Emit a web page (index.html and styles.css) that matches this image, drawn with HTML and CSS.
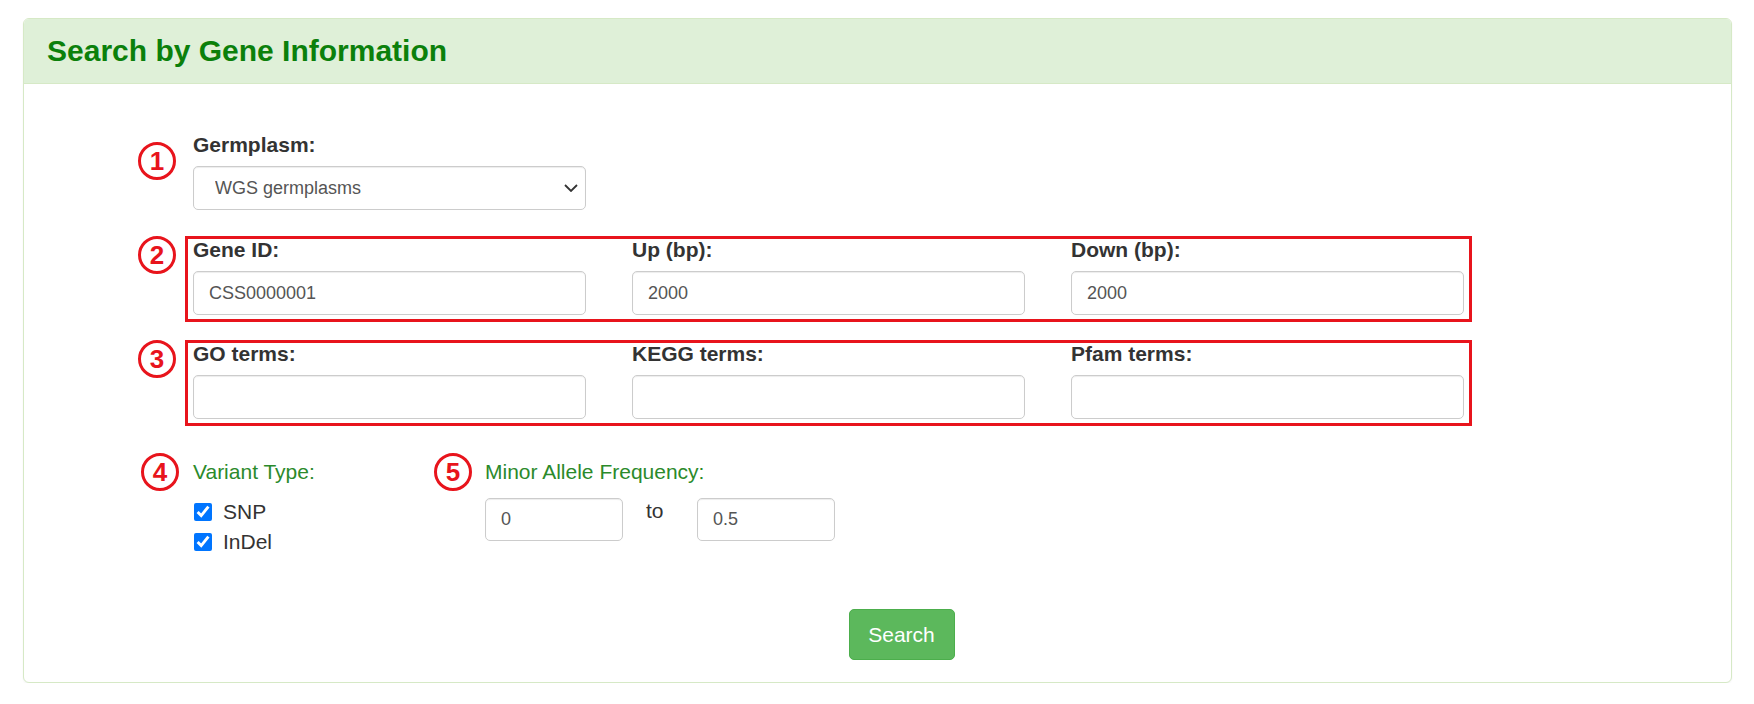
FILE: index.html
```html
<!DOCTYPE html>
<html lang="en">
<head>
    <meta charset="UTF-8">
    <title>Search by Gene Information</title>
    <link rel="stylesheet" href="styles.css">
</head>
<body>
    <div class="panel">
        <div class="panel-heading">
            <h3>Search by Gene Information</h3>
        </div>
        <div class="panel-body">
            <div class="form-row first">
                <span class="marker">1</span>
                <div class="box">
                    <div class="cols">
                        <div class="field">
                            <label for="germplasm">Germplasm:</label>
                            <div class="select-wrap">
                                <select id="germplasm">
                                    <option>WGS germplasms</option>
                                </select>
                                <svg class="chevron" width="14" height="8" viewBox="0 0 14 8"><path d="M1 1l6 6 6-6" fill="none" stroke="#333" stroke-width="1.8"/></svg>
                            </div>
                        </div>
                    </div>
                </div>
            </div>

            <div class="form-row">
                <span class="marker">2</span>
                <div class="box marked">
                    <div class="cols">
                        <div class="field">
                            <label for="gene-id">Gene ID:</label>
                            <input type="text" id="gene-id" value="CSS0000001">
                        </div>
                        <div class="field">
                            <label for="up">Up (bp):</label>
                            <input type="text" id="up" value="2000">
                        </div>
                        <div class="field">
                            <label for="down">Down (bp):</label>
                            <input type="text" id="down" value="2000">
                        </div>
                    </div>
                </div>
            </div>

            <div class="form-row">
                <span class="marker">3</span>
                <div class="box marked">
                    <div class="cols">
                        <div class="field">
                            <label for="go">GO terms:</label>
                            <input type="text" id="go">
                        </div>
                        <div class="field">
                            <label for="kegg">KEGG terms:</label>
                            <input type="text" id="kegg">
                        </div>
                        <div class="field">
                            <label for="pfam">Pfam terms:</label>
                            <input type="text" id="pfam">
                        </div>
                    </div>
                </div>
            </div>

            <div class="form-row last">
                <span class="marker">4</span>
                <div class="box">
                    <div class="options">
                        <div class="variant">
                            <p class="green-label">Variant Type:</p>
                            <label class="check"><input type="checkbox" checked> SNP</label>
                            <label class="check"><input type="checkbox" checked> InDel</label>
                        </div>
                        <span class="marker">5</span>
                        <div class="maf">
                            <p class="green-label">Minor Allele Frequency:</p>
                            <div class="maf-inputs">
                                <input type="text" value="0">
                                <span class="to">to</span>
                                <input type="text" value="0.5">
                            </div>
                        </div>
                    </div>
                </div>
            </div>

            <div class="actions">
                <button type="button">Search</button>
            </div>
        </div>
    </div>
</body>
</html>
```

FILE: styles.css
```css
body {
    margin: 0;
    padding: 18px 22px 0 23px;
    font-family: 'Liberation Sans', Arial, sans-serif;
    font-size: 21px;
    color: #333;
    background-color: #fff;
}
.panel {
    border: 1px solid #d6e9c6;
    border-radius: 6px;
    box-shadow: 0 1px 2px rgba(0,0,0,0.05);
    background-color: #fff;
}
.panel-heading {
    height: 64px;
    padding: 0 23px;
    display: flex;
    align-items: center;
    background-color: #dff0d8;
    border-bottom: 1px solid #d6e9c6;
    border-radius: 5px 5px 0 0;
}
.panel-heading h3 {
    margin: 0;
    font-size: 30px;
    font-weight: bold;
    color: #0b800b;
}
.panel-body {
    padding: 47px 0 22px 114px;
}
.form-row {
    display: flex;
    align-items: flex-start;
    margin-bottom: 18px;
}
.form-row.first {
    margin-bottom: 19px;
}
.form-row.last {
    margin-top: 32px;
}
.marker {
    flex: none;
    width: 32px;
    height: 32px;
    margin: 0 9px 0 0;
    border: 3px solid #e8141c;
    border-radius: 50%;
    display: flex;
    align-items: center;
    justify-content: center;
    color: #e8141c;
    font-weight: bold;
    font-size: 26px;
    line-height: 1;
}
.form-row.first .marker {
    margin-top: 11px;
}
.form-row.last > .marker {
    margin: -5px 6px 0 3px;
}
.form-row.last > .box {
    width: 1268px;
}
.box {
    width: 1271px;
    padding: 1px 5px 4px 5px;
    border: 3px solid transparent;
}
.box.marked {
    border-color: #e8141c;
}
.cols {
    display: grid;
    grid-template-columns: repeat(3, 393px);
    column-gap: 46px;
}
.field label {
    display: block;
    height: 20px;
    line-height: 20px;
    margin-bottom: 11px;
    font-weight: bold;
}
input[type="text"], select {
    width: 100%;
    height: 44px;
    box-sizing: border-box;
    padding: 0 15px;
    border: 1px solid #ccc;
    border-radius: 5px;
    box-shadow: inset 0 1px 1px rgba(0,0,0,0.075);
    font-family: inherit;
    font-size: 18px;
    color: #555;
    background-color: #fff;
}
.select-wrap {
    position: relative;
}
select {
    appearance: none;
    padding-left: 21px;
}
.chevron {
    position: absolute;
    right: 8px;
    top: 18px;
    pointer-events: none;
}
.options {
    display: flex;
    align-items: flex-start;
}
.variant {
    width: 241px;
}
.options .marker {
    margin: -9px 13px 0 0;
}
.green-label {
    margin: 0;
    height: 20px;
    line-height: 20px;
    color: #2b8a2b;
}
.check {
    display: flex;
    align-items: center;
    height: 25px;
    margin-top: 5px;
}
.variant .green-label + .check {
    margin-top: 17px;
}
.check input {
    width: 18px;
    height: 18px;
    margin: 0 11px 0 1px;
    accent-color: #0075ff;
}
.maf-inputs {
    display: flex;
    align-items: flex-start;
    margin-top: 16px;
}
.maf-inputs input[type="text"] {
    width: 138px;
    height: 43px;
}
.to {
    width: 74px;
    padding-left: 23px;
    box-sizing: border-box;
    line-height: 26px;
}
.actions {
    display: flex;
    justify-content: center;
    margin: 48px 0 0 -66px;
}
button {
    width: 106px;
    height: 51px;
    background-color: #5cb85c;
    border: 1px solid #4cae4c;
    border-radius: 5px;
    color: #fff;
    font-family: inherit;
    font-size: 21px;
    cursor: pointer;
}
```
